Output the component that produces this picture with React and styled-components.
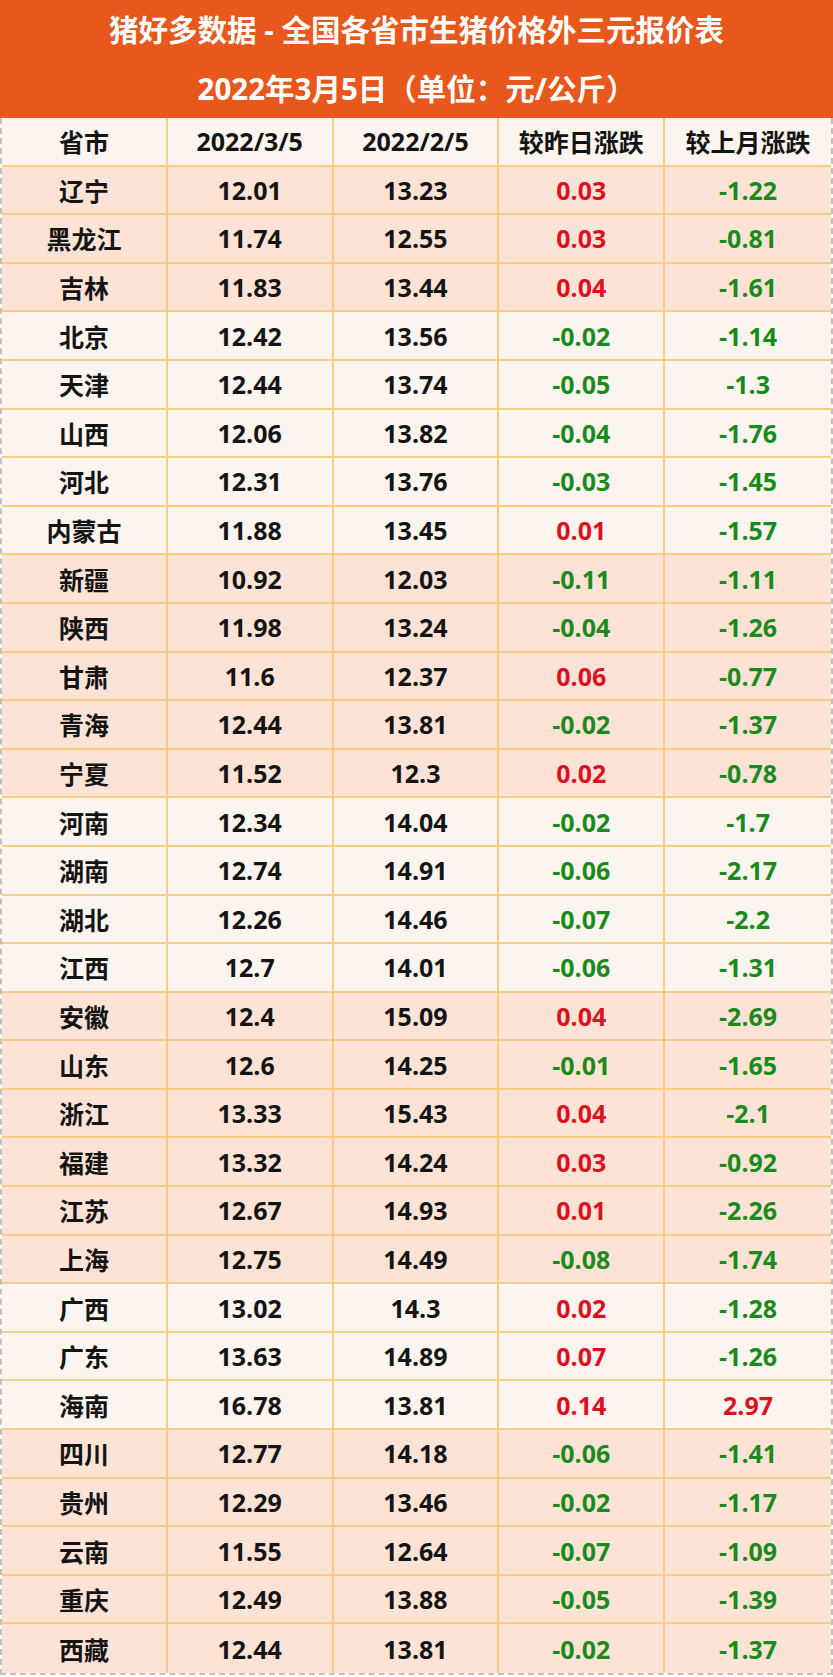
import React from "react"
import styled, { createGlobalStyle } from "styled-components"

const GlobalStyle = createGlobalStyle`
  html, body {
    margin: 0;
    padding: 0;
    overflow: hidden;
    background: #fff;
  }
  body {
    font-family: "Open Sans", "Noto Sans CJK SC", sans-serif;
  }
`

// css
const Page = styled.div`
  width: 833px;
  height: 1677px;
  box-sizing: border-box;
  display: flex;
  flex-direction: column;
`

const Banner = styled.div`
  height: 118px;
  background: #e8571b;
  color: #fff;
  display: flex;
  flex-direction: column;
  align-items: center;
  justify-content: center;
  font-weight: 700;
  font-size: 29.5px;
  line-height: 59px;
`

const Table = styled.div`
  border-left: 2px dashed #c4c0bc;
  border-right: 2px dashed #c4c0bc;
  border-bottom: 2px dashed #c4c0bc;
  display: flex;
  flex-direction: column;
`

const Row = styled.div`
  display: grid;
  grid-template-columns: repeat(5, 1fr);
  height: 48.6px;
  box-sizing: border-box;
  border-bottom: 2px solid #f7cd86;
  background: ${p => (p.$pink ? "#fce3d6" : "#fbf4ef")};
  &:last-child {
    border-bottom: none;
  }
`

const Cell = styled.div`
  display: flex;
  align-items: center;
  justify-content: center;
  border-right: 2px solid #f7cd86;
  font-size: 25px;
  font-weight: 700;
  color: ${p => (p.$tone === "up" ? "#dd1020" : p.$tone === "down" ? "#1a8a1c" : "#141414")};
  &:last-child {
    border-right: none;
  }
`

const rows = [
  ["辽宁", "12.01", "13.23", "0.03", "-1.22", 1],
  ["黑龙江", "11.74", "12.55", "0.03", "-0.81", 1],
  ["吉林", "11.83", "13.44", "0.04", "-1.61", 1],
  ["北京", "12.42", "13.56", "-0.02", "-1.14", 0],
  ["天津", "12.44", "13.74", "-0.05", "-1.3", 0],
  ["山西", "12.06", "13.82", "-0.04", "-1.76", 0],
  ["河北", "12.31", "13.76", "-0.03", "-1.45", 0],
  ["内蒙古", "11.88", "13.45", "0.01", "-1.57", 0],
  ["新疆", "10.92", "12.03", "-0.11", "-1.11", 1],
  ["陕西", "11.98", "13.24", "-0.04", "-1.26", 1],
  ["甘肃", "11.6", "12.37", "0.06", "-0.77", 1],
  ["青海", "12.44", "13.81", "-0.02", "-1.37", 1],
  ["宁夏", "11.52", "12.3", "0.02", "-0.78", 1],
  ["河南", "12.34", "14.04", "-0.02", "-1.7", 0],
  ["湖南", "12.74", "14.91", "-0.06", "-2.17", 0],
  ["湖北", "12.26", "14.46", "-0.07", "-2.2", 0],
  ["江西", "12.7", "14.01", "-0.06", "-1.31", 0],
  ["安徽", "12.4", "15.09", "0.04", "-2.69", 1],
  ["山东", "12.6", "14.25", "-0.01", "-1.65", 1],
  ["浙江", "13.33", "15.43", "0.04", "-2.1", 1],
  ["福建", "13.32", "14.24", "0.03", "-0.92", 1],
  ["江苏", "12.67", "14.93", "0.01", "-2.26", 1],
  ["上海", "12.75", "14.49", "-0.08", "-1.74", 1],
  ["广西", "13.02", "14.3", "0.02", "-1.28", 0],
  ["广东", "13.63", "14.89", "0.07", "-1.26", 0],
  ["海南", "16.78", "13.81", "0.14", "2.97", 0],
  ["四川", "12.77", "14.18", "-0.06", "-1.41", 1],
  ["贵州", "12.29", "13.46", "-0.02", "-1.17", 1],
  ["云南", "11.55", "12.64", "-0.07", "-1.09", 1],
  ["重庆", "12.49", "13.88", "-0.05", "-1.39", 1],
  ["西藏", "12.44", "13.81", "-0.02", "-1.37", 1],
]

const tone = v => (v.startsWith("-") ? "down" : "up")

export default function App() {
  return (
    <Page>
      <GlobalStyle />
      <Banner>
        <div>猪好多数据 - 全国各省市生猪价格外三元报价表</div>
        <div>2022年3月5日（单位：元/公斤）</div>
      </Banner>
      <Table>
        <Row>
          <Cell>省市</Cell>
          <Cell>2022/3/5</Cell>
          <Cell>2022/2/5</Cell>
          <Cell>较昨日涨跌</Cell>
          <Cell>较上月涨跌</Cell>
        </Row>
        {rows.map(([name, now, last, day, month, pink]) => (
          <Row key={name} $pink={pink === 1}>
            <Cell>{name}</Cell>
            <Cell>{now}</Cell>
            <Cell>{last}</Cell>
            <Cell $tone={tone(day)}>{day}</Cell>
            <Cell $tone={tone(month)}>{month}</Cell>
          </Row>
        ))}
      </Table>
    </Page>
  )
}
